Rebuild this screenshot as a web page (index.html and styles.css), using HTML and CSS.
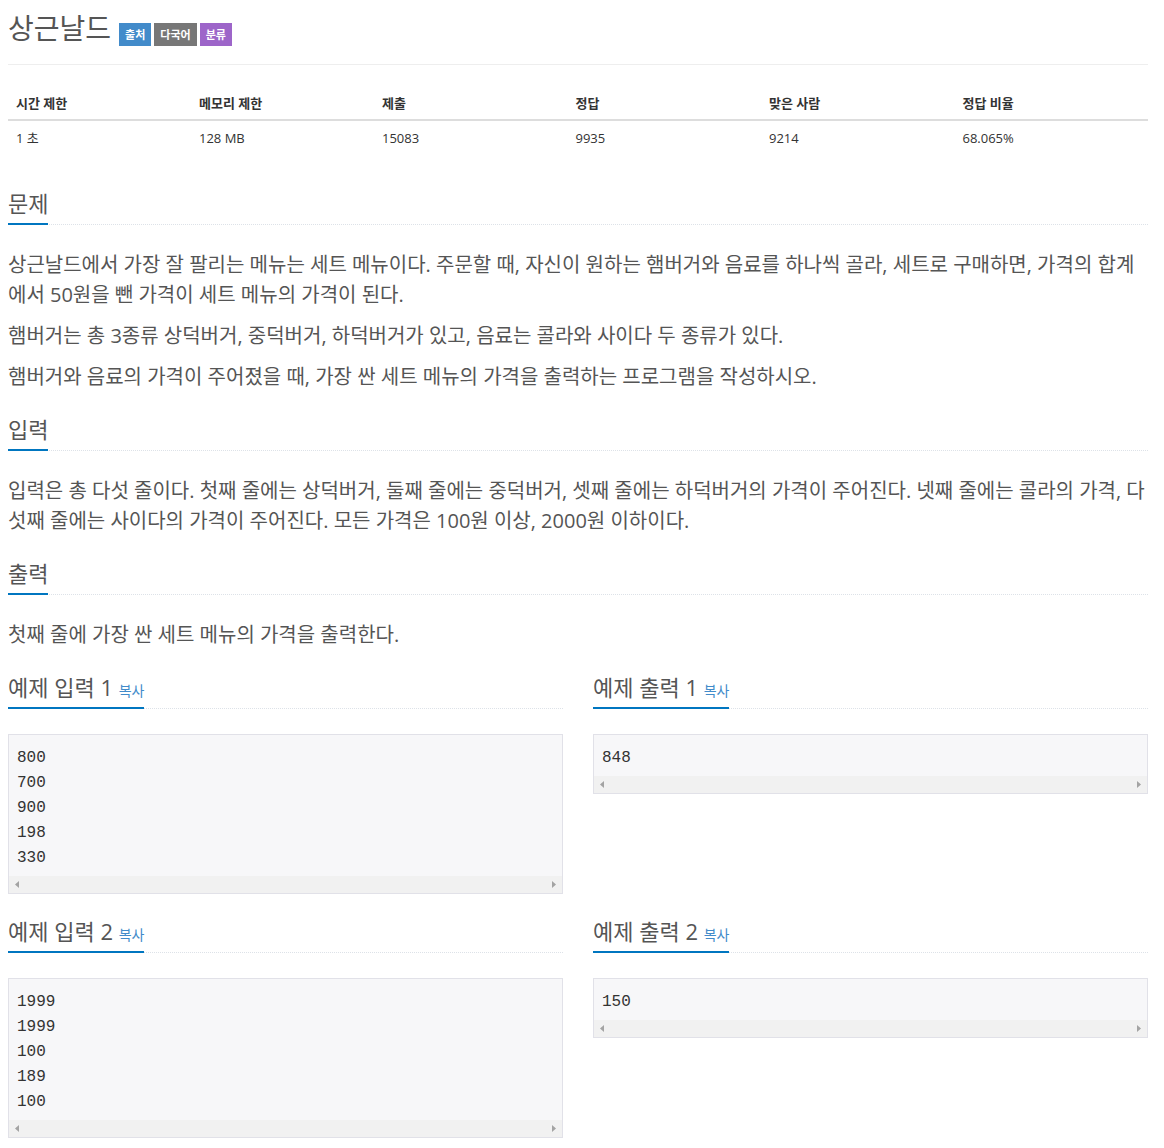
FILE: index.html
```html
<!DOCTYPE html>
<html lang="ko">
<head>
<meta charset="utf-8">
<title>상근날드</title>
<link rel="stylesheet" href="styles.css">
</head>
<body>
<div class="page">
  <div class="page-header">
    <h1 class="title">상근날드</h1>
    <div class="labels">
      <span class="label label-blue">출처</span>
      <span class="label label-gray">다국어</span>
      <span class="label label-purple">분류</span>
    </div>
  </div>

  <table class="info">
    <thead>
      <tr>
        <th class="c16">시간 제한</th>
        <th class="c16">메모리 제한</th>
        <th class="c17">제출</th>
        <th class="c17">정답</th>
        <th class="c17">맞은 사람</th>
        <th class="c17">정답 비율</th>
      </tr>
    </thead>
    <tbody>
      <tr>
        <td>1 초 </td>
        <td>128 MB</td>
        <td>15083</td>
        <td>9935</td>
        <td>9214</td>
        <td>68.065%</td>
      </tr>
    </tbody>
  </table>

  <section class="section">
    <div class="headline"><h2>문제</h2></div>
    <div class="text">
      <p>상근날드에서 가장 잘 팔리는 메뉴는 세트 메뉴이다. 주문할 때, 자신이 원하는 햄버거와 음료를 하나씩 골라, 세트로 구매하면, 가격의 합계에서 50원을 뺀 가격이 세트 메뉴의 가격이 된다.</p>
      <p>햄버거는 총 3종류 상덕버거, 중덕버거, 하덕버거가 있고, 음료는 콜라와 사이다 두 종류가 있다.</p>
      <p>햄버거와 음료의 가격이 주어졌을 때, 가장 싼 세트 메뉴의 가격을 출력하는 프로그램을 작성하시오.</p>
    </div>
  </section>

  <section class="section">
    <div class="headline"><h2>입력</h2></div>
    <div class="text">
      <p>입력은 총 다섯 줄이다. 첫째 줄에는 상덕버거, 둘째 줄에는 중덕버거, 셋째 줄에는 하덕버거의 가격이 주어진다. 넷째 줄에는 콜라의 가격, 다섯째 줄에는 사이다의 가격이 주어진다. 모든 가격은 100원 이상, 2000원 이하이다.</p>
    </div>
  </section>

  <section class="section">
    <div class="headline"><h2>출력</h2></div>
    <div class="text">
      <p>첫째 줄에 가장 싼 세트 메뉴의 가격을 출력한다.</p>
    </div>
  </section>

  <div class="samples">
    <section class="sample">
      <div class="headline"><h2>예제 입력 1 <span class="copy">복사</span></h2></div>
      <div class="sampledata">
        <pre>800
700
900
198
330</pre>
        <div class="hscroll">
          <svg width="4" height="7" viewBox="0 0 4 7"><polygon points="4,0 0,3.5 4,7" fill="#a3a3a3"/></svg>
          <svg width="4" height="7" viewBox="0 0 4 7"><polygon points="0,0 4,3.5 0,7" fill="#a3a3a3"/></svg>
        </div>
      </div>
    </section>
    <section class="sample">
      <div class="headline"><h2>예제 출력 1 <span class="copy">복사</span></h2></div>
      <div class="sampledata">
        <pre>848</pre>
        <div class="hscroll">
          <svg width="4" height="7" viewBox="0 0 4 7"><polygon points="4,0 0,3.5 4,7" fill="#a3a3a3"/></svg>
          <svg width="4" height="7" viewBox="0 0 4 7"><polygon points="0,0 4,3.5 0,7" fill="#a3a3a3"/></svg>
        </div>
      </div>
    </section>
    <section class="sample">
      <div class="headline"><h2>예제 입력 2 <span class="copy">복사</span></h2></div>
      <div class="sampledata">
        <pre>1999
1999
100
189
100</pre>
        <div class="hscroll">
          <svg width="4" height="7" viewBox="0 0 4 7"><polygon points="4,0 0,3.5 4,7" fill="#a3a3a3"/></svg>
          <svg width="4" height="7" viewBox="0 0 4 7"><polygon points="0,0 4,3.5 0,7" fill="#a3a3a3"/></svg>
        </div>
      </div>
    </section>
    <section class="sample">
      <div class="headline"><h2>예제 출력 2 <span class="copy">복사</span></h2></div>
      <div class="sampledata">
        <pre>150</pre>
        <div class="hscroll">
          <svg width="4" height="7" viewBox="0 0 4 7"><polygon points="4,0 0,3.5 4,7" fill="#a3a3a3"/></svg>
          <svg width="4" height="7" viewBox="0 0 4 7"><polygon points="0,0 4,3.5 0,7" fill="#a3a3a3"/></svg>
        </div>
      </div>
    </section>
  </div>
</div>
</body>
</html>
```

FILE: styles.css
```css
html, body {
  background: #fff;
}
body {
  margin: 8px;
  font-family: "Open Sans", "Noto Sans CJK KR", sans-serif;
  color: #555;
}
.page {
  width: 1140px;
}

.page-header {
  display: flex;
  align-items: flex-start;
  padding-bottom: 16px;
  border-bottom: 1px solid #eee;
}
.title {
  margin: 0;
  font-size: 28px;
  font-weight: 400;
  line-height: 40px;
  color: #555;
}
.labels {
  display: flex;
  gap: 3px;
  margin-top: 15px;
  margin-left: 8px;
}
.label {
  display: block;
  height: 23px;
  line-height: 23px;
  padding: 0 6px;
  font-size: 11px;
  font-weight: 700;
  color: #fff;
}
.label-blue { background: #428bca; }
.label-gray { background: #777; }
.label-purple { background: #9d65c9; }

.info {
  width: 100%;
  table-layout: fixed;
  border-collapse: collapse;
  margin-top: 20px;
  margin-bottom: 36px;
  color: #333;
}
.info th {
  text-align: left;
  font-size: 13px;
  font-weight: 700;
  line-height: 18px;
  padding: 9px 8px 7px 8px;
  border-bottom: 2px solid #ddd;
}
.info td {
  font-size: 13px;
  line-height: 18px;
  padding: 8px;
}
.c16 { width: 16%; }
.c17 { width: 17%; }

.headline {
  display: flex;
  align-items: flex-end;
  margin-top: 25px;
  margin-bottom: 25px;
  border-bottom: 1px dotted #dde2e8;
}
.headline h2 {
  margin: 0 0 -1px 0;
  padding-bottom: 8px;
  font-size: 22px;
  font-weight: 400;
  line-height: 24px;
  color: #555;
  border-bottom: 2px solid #0076c0;
}
.copy {
  font-size: 14px;
  line-height: 1;
  color: #428bca;
}

.text p {
  margin: 0;
  font-size: 20px;
  line-height: 30px;
}
.text p + p {
  margin-top: 11px;
}

.samples {
  display: grid;
  grid-template-columns: 1fr 1fr;
  column-gap: 30px;
}
.sampledata {
  border: 1px solid #e1e1e8;
  background: #f7f7f9;
}
.sampledata pre {
  margin: 0;
  padding: 11px 8px 5px 8px;
  font-family: "Liberation Mono", monospace;
  font-size: 16px;
  line-height: 25px;
  color: #333;
}
.hscroll {
  height: 17px;
  background: #f1f1f1;
  display: flex;
  align-items: center;
  justify-content: space-between;
  padding: 0 6px;
}
.hscroll svg {
  display: block;
}
```
